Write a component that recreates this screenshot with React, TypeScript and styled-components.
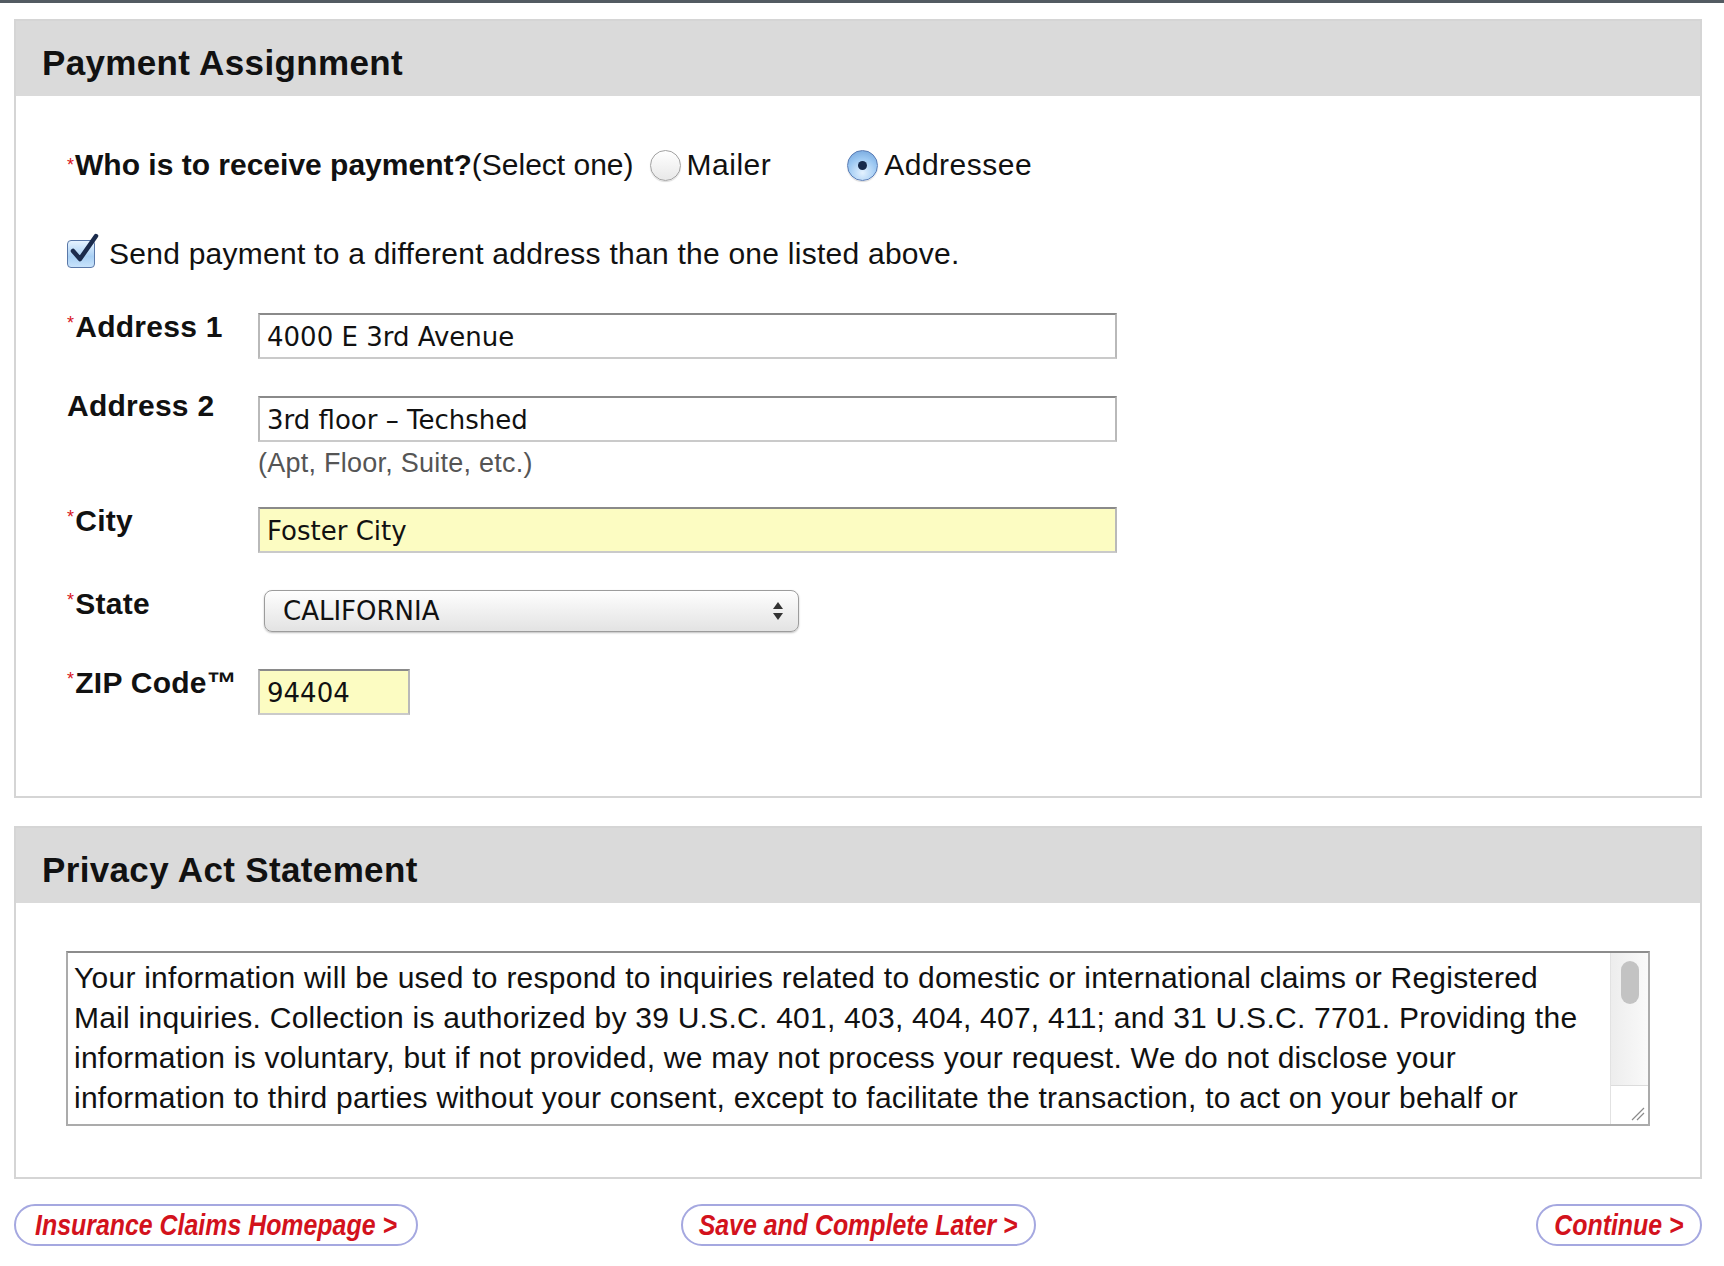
import React from 'react';
import styled, { createGlobalStyle } from 'styled-components';

const GlobalStyle = createGlobalStyle`
  html, body {
    margin: 0;
    padding: 0;
    background: #fff;
  }
  body {
    font-family: 'Liberation Sans', Arial, Helvetica, sans-serif;
    letter-spacing: 0.25px;
    color: #111;
  }
`;

const TopBar = styled.div`
  height: 3px;
  background: #535b62;
`;

const Page = styled.div`
  padding: 16px 22px 40px 14px;
  display: flex;
  flex-direction: column;
`;

const Panel = styled.section`
  border: 2px solid #d5d5d5;
  background: #fff;
  & + & {
    margin-top: 28px;
  }
`;

const PanelHeader = styled.h2`
  margin: 0;
  height: 75px;
  box-sizing: border-box;
  padding: 8px 0 0 26px;
  display: flex;
  align-items: center;
  background: #dadada;
  font-size: 35px;
  font-weight: bold;
  letter-spacing: 0.35px;
  color: #111;
`;

const PanelBody = styled.div<{ $pad: string }>`
  padding: ${(p) => p.$pad};
`;

const Req = styled.span`
  color: #d8141c;
  font-size: 18px;
  font-weight: normal;
  vertical-align: 8px;
  margin-right: 1px;
`;

const QuestionRow = styled.div`
  display: flex;
  align-items: center;
  font-size: 30px;
  line-height: 34px;
  letter-spacing: 0;
  margin-bottom: 55px;
`;

const Question = styled.span`
  font-weight: bold;
`;

const RadioOption = styled.label<{ $gap: number }>`
  display: flex;
  align-items: center;
  gap: 6px;
  margin-left: ${(p) => p.$gap}px;
  letter-spacing: 0.5px;
`;

const Radio = styled.span<{ $checked?: boolean }>`
  width: 31px;
  height: 31px;
  box-sizing: border-box;
  border-radius: 50%;
  border: 1.5px solid ${(p) => (p.$checked ? '#5b7db5' : '#a2a2a2')};
  background: ${(p) =>
    p.$checked
      ? 'radial-gradient(circle at 50% 75%, #e4f2ff 0%, #9cc8f2 55%, #6d9fd8 100%)'
      : 'linear-gradient(#ffffff, #e8e8e8)'};
  box-shadow: 0 1px 1px rgba(0, 0, 0, 0.15);
  display: flex;
  align-items: center;
  justify-content: center;
  &::after {
    content: '';
    display: ${(p) => (p.$checked ? 'block' : 'none')};
    width: 9px;
    height: 9px;
    border-radius: 50%;
    background: #172a4b;
  }
`;

const CheckRow = styled.label`
  display: flex;
  align-items: center;
  gap: 14px;
  font-size: 30px;
  line-height: 34px;
  margin-bottom: 42px;
`;

const CheckBox = styled.span`
  position: relative;
  width: 28px;
  height: 28px;
  box-sizing: border-box;
  border-radius: 4px;
  border: 1.5px solid #5a78a8;
  background: linear-gradient(#e6f3ff, #a9d0f4 60%, #c8e3fb);
  & svg {
    position: absolute;
    left: 2px;
    top: -7px;
    overflow: visible;
  }
`;

const Fields = styled.div`
  display: flex;
  flex-direction: column;
  gap: 37px;
`;

const FieldRow = styled.div`
  display: flex;
  align-items: flex-start;
`;

const FieldLabel = styled.label`
  width: 191px;
  flex-shrink: 0;
  font-size: 30px;
  font-weight: bold;
  line-height: 20px;
  white-space: nowrap;
`;

const Control = styled.div`
  display: flex;
  flex-direction: column;
`;

const TextInput = styled.input<{ $width: number; $highlight?: boolean }>`
  width: ${(p) => p.$width}px;
  height: 46px;
  box-sizing: border-box;
  margin: 0;
  padding: 2px 7px 0;
  border: 2px solid;
  border-color: #8a8a8a #b9b9b9 #cacaca #b9b9b9;
  background: ${(p) => (p.$highlight ? '#fcfcc2' : '#fff')};
  font-family: 'DejaVu Sans', 'Lucida Grande', sans-serif;
  font-size: 26px;
  letter-spacing: 0;
  color: #111;
  outline: none;
`;

const Hint = styled.div`
  margin: 6px 0 -8px;
  font-size: 27px;
  line-height: 30px;
  color: #555;
`;

const Select = styled.div`
  margin-left: 6px;
  width: 535px;
  height: 42px;
  box-sizing: border-box;
  padding: 0 14px 0 18px;
  display: flex;
  align-items: center;
  justify-content: space-between;
  border: 1px solid #9c9c9c;
  border-radius: 8px;
  background: linear-gradient(#fefefe, #efefef 55%, #e3e3e3);
  box-shadow: 0 1px 2px rgba(0, 0, 0, 0.25);
  font-family: 'DejaVu Sans', 'Lucida Grande', sans-serif;
  font-size: 26px;
  letter-spacing: 0;
  color: #111;
`;

const TextBox = styled.div`
  display: grid;
  grid-template-columns: 1fr 38px;
  height: 175px;
  box-sizing: border-box;
  border: 2px solid #ababab;
  border-top-color: #8c8c8c;
`;

const TextContent = styled.div`
  padding: 5px 6px;
  font-size: 30px;
  line-height: 40px;
  white-space: nowrap;
  overflow: hidden;
  color: #111;
`;

const ScrollBar = styled.div`
  display: flex;
  flex-direction: column;
  border-left: 1px solid #e2e2e2;
  background: linear-gradient(90deg, #ededed, #f9f9f9);
`;

const ScrollTrack = styled.div`
  flex: 1;
  padding-top: 8px;
  display: flex;
  justify-content: center;
`;

const Thumb = styled.div`
  width: 18px;
  height: 43px;
  border-radius: 9px;
  background: #c3c3c3;
`;

const ResizeCorner = styled.div`
  height: 35px;
  border-top: 1px solid #dcdcdc;
  background: #fff;
  display: flex;
  align-items: flex-end;
  justify-content: flex-end;
  padding: 0 3px 3px 0;
`;

const ButtonRow = styled.div`
  margin-top: 25px;
  display: grid;
  grid-template-columns: 1fr auto 1fr;
  align-items: center;
  & > :first-child {
    justify-self: start;
  }
  & > :last-child {
    justify-self: end;
  }
`;

const PillButton = styled.button<{ $width: number }>`
  width: ${(p) => p.$width}px;
  height: 42px;
  box-sizing: border-box;
  padding: 0;
  display: flex;
  align-items: center;
  justify-content: center;
  border: 2px solid #a5a8e0;
  border-radius: 21px;
  background: #fff;
  color: #d3121c;
  font-family: 'Liberation Sans', Arial, sans-serif;
  font-size: 30px;
  font-weight: bold;
  font-style: italic;
  letter-spacing: 0;
  line-height: 1;
  white-space: nowrap;
  cursor: pointer;
`;

const Condensed = styled.span`
  display: inline-block;
  transform: scaleX(0.83);
`;

const privacyLines = [
  'Your information will be used to respond to inquiries related to domestic or international claims or Registered',
  'Mail inquiries. Collection is authorized by 39 U.S.C. 401, 403, 404, 407, 411; and 31 U.S.C. 7701. Providing the',
  'information is voluntary, but if not provided, we may not process your request. We do not disclose your',
  'information to third parties without your consent, except to facilitate the transaction, to act on your behalf or',
];

function Required() {
  return <Req>*</Req>;
}

export default function App() {
  return (
    <>
      <GlobalStyle />
      <TopBar />
      <Page>
        <Panel>
          <PanelHeader>Payment Assignment</PanelHeader>
          <PanelBody $pad="52px 0 81px 51px">
            <QuestionRow>
              <Required />
              <Question>Who is to receive payment?</Question>
              <span>(Select one)</span>
              <RadioOption $gap={16}>
                <Radio />
                Mailer
              </RadioOption>
              <RadioOption $gap={76}>
                <Radio $checked />
                Addressee
              </RadioOption>
            </QuestionRow>

            <CheckRow>
              <CheckBox>
                <svg width="30" height="30" viewBox="0 0 30 30">
                  <path
                    d="M3 17 L10 25 L26 2"
                    fill="none"
                    stroke="#1b2b4c"
                    strokeWidth="4.5"
                    strokeLinecap="round"
                    strokeLinejoin="round"
                  />
                </svg>
              </CheckBox>
              Send payment to a different address than the one listed above.
            </CheckRow>

            <Fields>
              <FieldRow>
                <FieldLabel>
                  <Required />
                  Address 1
                </FieldLabel>
                <TextInput $width={859} defaultValue="4000 E 3rd Avenue" readOnly />
              </FieldRow>
              <FieldRow>
                <FieldLabel>Address 2</FieldLabel>
                <Control>
                  <TextInput $width={859} defaultValue="3rd floor – Techshed" readOnly />
                  <Hint>(Apt, Floor, Suite, etc.)</Hint>
                </Control>
              </FieldRow>
              <FieldRow>
                <FieldLabel>
                  <Required />
                  City
                </FieldLabel>
                <TextInput $width={859} $highlight defaultValue="Foster City" readOnly />
              </FieldRow>
              <FieldRow>
                <FieldLabel>
                  <Required />
                  State
                </FieldLabel>
                <Select>
                  <span>CALIFORNIA</span>
                  <svg width="12" height="22" viewBox="0 0 12 22">
                    <path d="M6 2 L11 9 L1 9 Z" fill="#333" />
                    <path d="M6 20 L11 13 L1 13 Z" fill="#333" />
                  </svg>
                </Select>
              </FieldRow>
              <FieldRow>
                <FieldLabel>
                  <Required />
                  ZIP Code™
                </FieldLabel>
                <TextInput $width={152} $highlight defaultValue="94404" readOnly />
              </FieldRow>
            </Fields>
          </PanelBody>
        </Panel>

        <Panel>
          <PanelHeader>Privacy Act Statement</PanelHeader>
          <PanelBody $pad="48px 50px 51px 50px">
            <TextBox>
              <TextContent>
                {privacyLines.map((line) => (
                  <div key={line}>{line}</div>
                ))}
              </TextContent>
              <ScrollBar>
                <ScrollTrack>
                  <Thumb />
                </ScrollTrack>
                <ResizeCorner>
                  <svg width="14" height="14" viewBox="0 0 14 14">
                    <path d="M1 13 L13 1 M6 13 L13 6" stroke="#8a8a8a" strokeWidth="1.2" />
                  </svg>
                </ResizeCorner>
              </ScrollBar>
            </TextBox>
          </PanelBody>
        </Panel>

        <ButtonRow>
          <PillButton $width={404}>
            <Condensed>Insurance Claims Homepage &gt;</Condensed>
          </PillButton>
          <PillButton $width={355}>
            <Condensed>Save and Complete Later &gt;</Condensed>
          </PillButton>
          <PillButton $width={166}>
            <Condensed>Continue &gt;</Condensed>
          </PillButton>
        </ButtonRow>
      </Page>
    </>
  );
}
